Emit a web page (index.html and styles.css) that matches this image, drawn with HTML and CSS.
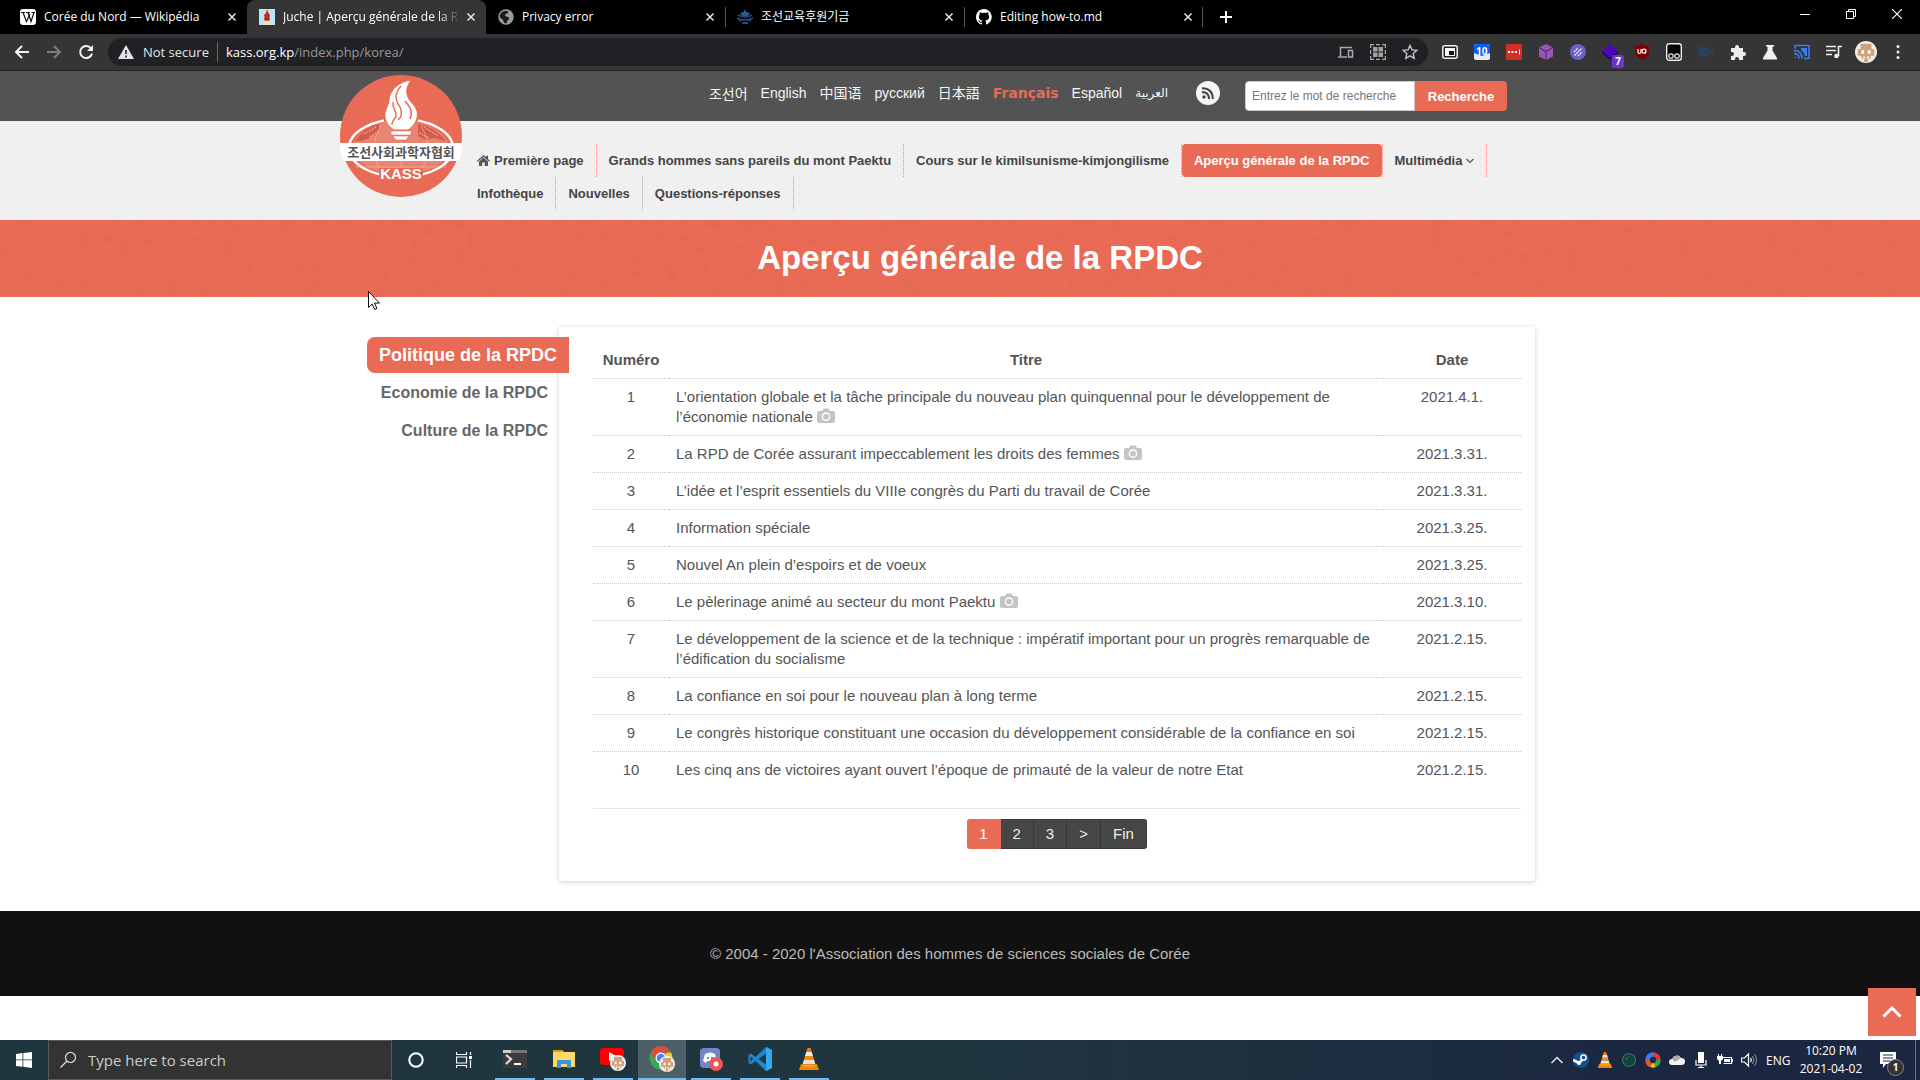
FILE: index.html
```html
<!DOCTYPE html>
<html lang="fr">
<head>
<meta charset="utf-8">
<title>Juche | Aperçu générale de la RPDC</title>
<link rel="stylesheet" href="styles.css">
</head>
<body>
<svg class="defs" aria-hidden="true">
  <symbol id="close" viewBox="0 0 16 16"><path d="M4 4l8 8M12 4l-8 8" stroke="#e8e8e8" stroke-width="1.700"/></symbol>
  <symbol id="camera" viewBox="0 0 18 16"><path d="M2 3h3l1.500-2.500h5L13 3h3a2 2 0 0 1 2 2v8a2 2 0 0 1-2 2H2a2 2 0 0 1-2-2V5a2 2 0 0 1 2-2z" fill="#c4c4c4"/><circle cx="9" cy="8.700" r="3.600" fill="none" stroke="#fff" stroke-width="1.500"/></symbol>
  <symbol id="avatar" viewBox="0 0 24 24"><circle cx="12" cy="12" r="12" fill="#efeeec"/><path d="M6 3h12v6h3v7h-4v3h-3v4h-4v-4H7v-3H3V9h3z" fill="#d3a078"/><path d="M7 10h3v4H7zM14 10h3v4h-3zM9 17h2v2H9zM13 17h2v2h-2z" fill="#fff"/></symbol>
  <symbol id="cone" viewBox="0 0 20 22"><path d="M8.500 0h3l1.300 4H7.200z" fill="#f07d0c"/><path d="M7.200 4h5.600l1.200 4H6z" fill="#eee"/><path d="M6 8h8l1.200 4H4.800z" fill="#f58a10"/><path d="M4.800 12h10.400l1.200 4H3.600z" fill="#e4e4e4"/><path d="M2 16h16l2 6H0z" fill="#f58206"/><path d="M4 18h12" stroke="#ffbd50"/></symbol>
</svg>

<header class="browser">
  <div class="tabs">
    <div class="tab">
      <svg width="16" height="16" viewBox="0 0 16 16"><rect width="16" height="16" rx="3" fill="#fff"/><path d="M1 3.500h4M6 3.500h4M11.500 3.500H15M3 3.500l3.500 9L10 5M8 3.500l3 9 3-9" fill="none" stroke="#111" stroke-width="1.200"/></svg>
      <span class="tab-title">Corée du Nord — Wikipédia</span>
      <button class="icon-btn" aria-label="Close tab"><svg width="14" height="14"><use href="#close"/></svg></button>
    </div>
    <div class="tab tab-active">
      <svg width="16" height="16" viewBox="0 0 16 16"><rect width="16" height="16" fill="#bfe4f5"/><path d="M8 0l1 3 2 3-1 5H6L5 6l2-2z" fill="#d02a16"/><path d="M5 9h6l-1 3-1 3H7l-1-3z" fill="#a52b18"/><path d="M4 13q4-3 8 0l-1 3H5z" fill="#f4e4ae"/></svg>
      <span class="tab-title fade">Juche | Aperçu générale de la RPDC</span>
      <button class="icon-btn" aria-label="Close tab"><svg width="14" height="14"><use href="#close"/></svg></button>
    </div>
    <div class="tab">
      <svg width="16" height="16" viewBox="0 0 16 16"><circle cx="8" cy="8" r="7" fill="#9a9a9a"/><path d="M6 1c3 1 5 1 4 3-2 1-3 1-3 3l3 1c2 1 1 3-1 4v3c-4 0-3-4-5-5L1 8c0-3 3-7 5-7z" fill="#1a1a1a"/><circle cx="8" cy="8" r="7" fill="none" stroke="#9a9a9a" stroke-width="1.500"/></svg>
      <span class="tab-title">Privacy error</span>
      <button class="icon-btn" aria-label="Close tab"><svg width="14" height="14"><use href="#close"/></svg></button>
    </div>
    <div class="tab tab-line">
      <svg width="16" height="16" viewBox="0 0 16 16"><path d="M8 0l1.500 3L13 4l-2 3H5L3 4l3.500-1z" fill="#2f5896"/><path d="M1 6q7 4 14 0M0 9q8 4 16 0M2 12q6-3 12 0" fill="none" stroke="#27497e" stroke-width="1.600"/><path d="M5 13h6v2H5z" fill="#27497e"/></svg>
      <span class="tab-title">조선교육후원기금</span>
      <button class="icon-btn" aria-label="Close tab"><svg width="14" height="14"><use href="#close"/></svg></button>
    </div>
    <div class="tab tab-line">
      <svg width="16" height="16" viewBox="0 0 16 16"><path fill="#fff" d="M8 0C3.600 0 0 3.600 0 8c0 3.500 2.300 6.500 5.500 7.600.4.100.5-.2.500-.4v-1.400c-2.200.5-2.700-1-2.700-1-.4-.9-.9-1.200-.9-1.200-.7-.5.100-.5.100-.5.800.1 1.200.8 1.200.8.700 1.300 1.900.9 2.300.7.100-.5.300-.9.500-1.100-1.800-.2-3.600-.9-3.600-4 0-.9.300-1.600.8-2.100-.1-.2-.4-1 .1-2.100 0 0 .7-.2 2.200.8a7.500 7.500 0 0 1 4 0c1.500-1 2.200-.8 2.200-.8.400 1.100.2 1.900.1 2.100.5.600.8 1.300.8 2.100 0 3.100-1.900 3.700-3.700 3.900.3.300.6.800.6 1.500v2.200c0 .2.100.5.500.4A8 8 0 0 0 8 0z"/></svg>
      <span class="tab-title">Editing how-to.md</span>
      <button class="icon-btn" aria-label="Close tab"><svg width="14" height="14"><use href="#close"/></svg></button>
    </div>
    <button class="new-tab" aria-label="New tab"><svg width="14" height="14" viewBox="0 0 14 14"><path d="M7 1v12M1 7h12" stroke="#fff" stroke-width="2"/></svg></button>
    <div class="window-controls">
      <button class="icon-btn" aria-label="Minimize"><svg width="10" height="10"><path d="M0 5.500h10" stroke="#fff"/></svg></button>
      <button class="icon-btn" aria-label="Restore"><svg width="10" height="10" viewBox="0 0 10 10"><path d="M.5 2.500h7v7h-7zM2.500 2.500v-2h7v7h-2" fill="none" stroke="#fff"/></svg></button>
      <button class="icon-btn" aria-label="Close"><svg width="10" height="10" viewBox="0 0 10 10"><path d="M0 0l10 10M10 0L0 10" stroke="#fff" stroke-width="1.200"/></svg></button>
    </div>
  </div>
  <div class="toolbar">
    <div class="nav-buttons">
      <button class="icon-btn" aria-label="Back"><svg width="16" height="16" viewBox="0 0 16 16"><path d="M15 8H2M8 2L2 8l6 6" fill="none" stroke="#f2f2f2" stroke-width="2"/></svg></button>
      <button class="icon-btn" aria-label="Forward"><svg width="16" height="16" viewBox="0 0 16 16"><path d="M1 8h13M8 2l6 6-6 6" fill="none" stroke="#7d7d7d" stroke-width="2"/></svg></button>
      <button class="icon-btn" aria-label="Reload"><svg width="16" height="16" viewBox="0 0 16 16"><path d="M13 4.500A6 6 0 1 0 14 9.500" fill="none" stroke="#f2f2f2" stroke-width="2"/><path d="M15 1v6H9z" fill="#f2f2f2"/></svg></button>
    </div>
    <div class="address">
      <svg width="16" height="16" viewBox="0 0 16 16"><path d="M8 1l8 14H0z" fill="#e4e4e4"/><path d="M8 6v4M8 11.500v2" stroke="#222" stroke-width="1.600"/></svg>
      <span class="insecure">Not secure</span>
      <span class="url"><b>kass.org.kp</b>/index.php/korea/</span>
      <div class="address-icons">
        <svg width="16" height="16" viewBox="0 0 16 16"><path d="M0 13h9M2.500 12V3.500H14M10.500 6.500h4V13h-4z" fill="none" stroke="#aaa" stroke-width="1.500"/></svg>
        <svg width="16" height="16" viewBox="0 0 16 16"><path d="M.6 4V.6H4M12 .6h3.400V4M15.400 12v3.400H12M4 15.400H.6V12M6 .6h4M6 15.400h4M.6 6v4M15.400 6v4" fill="none" stroke="#aaa" stroke-width="1.200"/><path d="M3 3h4.500v4.500H3zM8.500 3H13v4.500H8.500zM3 8.500h4.500V13H3zM8.500 8.500H13V13H8.500z" fill="#a8a0a0"/></svg>
        <svg width="16" height="16" viewBox="0 0 16 16"><path d="M8 1.500l2 4.400 4.800.5-3.600 3.200 1 4.700L8 11.900l-4.200 2.400 1-4.700L1.200 6.400 6 5.900z" fill="none" stroke="#c4c4c4" stroke-width="1.400"/></svg>
      </div>
    </div>
    <div class="extensions">
      <svg width="16" height="16" viewBox="0 0 16 16"><rect x=".8" y="1.800" width="14.400" height="12.400" rx="2" fill="#222" stroke="#eee" stroke-width="1.500"/><path d="M3 4h10v8H3z" fill="#f6f6f6"/><path d="M7 7h5v4H7z" fill="#111"/></svg>
      <svg width="16" height="16" viewBox="0 0 16 16"><rect width="16" height="16" rx="2" fill="#e6ecf5"/><path d="M0 2q0-2 2-2h12q2 0 2 2v7l-8 3-8-3z" fill="#0a5cff"/><text x="2" y="11" class="svg-badge">10</text></svg>
      <svg width="16" height="16" viewBox="0 0 16 16"><rect width="16" height="16" rx="1" fill="#d32d27"/><path d="M2 7h2v2H2zM5.500 7h2v2h-2zM9 7h2v2H9zM13 5.500h1v5h-1z" fill="#fff"/></svg>
      <svg width="16" height="16" viewBox="0 0 16 16"><path d="M8 0l7 3.500v9L8 16l-7-3.500v-9z" fill="#9a55b8"/><path d="M1 3.500l7 4 7-4M8 7.500V16" fill="none" stroke="#54306b" stroke-width="1.200"/></svg>
      <svg width="16" height="16" viewBox="0 0 16 16"><circle cx="8" cy="8" r="8" fill="#6a5fc4"/><path d="M4 8l4-4M4.500 11.500l7-7M8 12l4-4" stroke="#fff" stroke-width="1.200" stroke-dasharray="2 .6"/></svg>
      <span class="ext-badged"><svg width="16" height="16" viewBox="0 0 16 16"><path d="M8 0l8 7-8 7-8-7z" fill="#4a08b8"/><path d="M0 7l8 7v2L0 9zM16 7l-8 7v2l8-7z" fill="#25006c"/></svg><span class="ext-badge">7</span></span>
      <svg width="16" height="16" viewBox="0 0 16 16"><path d="M8 0q4 2 7 2v5q0 6-7 9-7-3-7-9V2q3 0 7-2z" fill="#800000"/><path d="M4 5v3q0 1.500 1.500 1.500T7 8V5" fill="none" stroke="#fff" stroke-width="1.200"/><circle cx="10" cy="7.200" r="2" fill="none" stroke="#fff" stroke-width="1.200"/></svg>
      <svg width="16" height="18" viewBox="0 0 16 18"><rect x=".7" y=".7" width="14.600" height="16.600" rx="2.500" fill="#050505" stroke="#eee" stroke-width="1.400"/><circle cx="5" cy="13" r="2.200" fill="none" stroke="#ddd" stroke-width="1.300"/><circle cx="11" cy="13" r="2.200" fill="none" stroke="#ddd" stroke-width="1.300"/></svg>
      <svg width="16" height="16" viewBox="0 0 16 16"><path d="M2 3h7q2 0 2 2v6q0 2-2 2H2q-2 0-2-2V5q0-2 2-2zM12 7l4-3v8l-4-3z" fill="#2d4059"/></svg>
      <svg width="16" height="16" viewBox="0 0 16 16"><path d="M1 4h4V3a2 2 0 0 1 4 0v1h4v4h1a2 2 0 0 1 0 4h-1v4H9v-1a2 2 0 0 0-4 0v1H1v-4h1a2 2 0 0 0 0-4H1z" fill="#ececec"/></svg>
      <svg width="16" height="16" viewBox="0 0 16 16"><path d="M4 1h8v1.500h-1.500v4L15 14v1.500H1V14l4.500-7.500v-4H4z" fill="#f0f0f0"/></svg>
      <svg width="16" height="16" viewBox="0 0 16 16"><path d="M1 4.500v-3h14v13h-5" fill="none" stroke="#3b7de8" stroke-width="1.600"/><path d="M7 4h6v8h-2q-1-4-4-6z" fill="#3b7de8"/><path d="M0 6.500q8 0 8 8M0 9.500q5 0 5 5M1 13v1" fill="none" stroke="#3b7de8" stroke-width="1.700"/></svg>
      <svg width="16" height="16" viewBox="0 0 16 16"><path d="M0 2.500h10M0 6.500h10M0 10.500h6M12.500 12V2.500H16" fill="none" stroke="#eee" stroke-width="1.600"/><circle cx="10.500" cy="12" r="2.300" fill="#eee"/></svg>
      <svg class="avatar" width="22" height="22"><use href="#avatar"/></svg>
      <svg width="16" height="16" viewBox="0 0 16 16"><circle cx="8" cy="2.500" r="1.500" fill="#eee"/><circle cx="8" cy="8" r="1.500" fill="#eee"/><circle cx="8" cy="13.500" r="1.500" fill="#eee"/></svg>
    </div>
  </div>
</header>

<main class="page">
  <div class="topbar">
    <div class="header-inner topbar-inner">
      <nav class="languages" aria-label="Langues">
        <a href="#" class="lang-ko" lang="ko">조선어</a>
        <a href="#">English</a>
        <a href="#" lang="zh">中国语</a>
        <a href="#" lang="ru">русский</a>
        <a href="#" lang="ja">日本語</a>
        <a href="#" class="current">Français</a>
        <a href="#">Español</a>
        <a href="#" class="lang-ar" lang="ar">العربية</a>
      </nav>
      <a href="#" class="rss" aria-label="RSS"><svg width="12" height="12" viewBox="0 0 12 12"><circle cx="2" cy="10" r="1.700" fill="#444"/><path d="M0 5q7 0 7 7M0 1.200Q10.800 1.200 10.800 12" fill="none" stroke="#444" stroke-width="2"/></svg></a>
      <form class="search">
        <input type="text" placeholder="Entrez le mot de recherche" aria-label="Entrez le mot de recherche">
        <button type="button">Recherche</button>
      </form>
    </div>
  </div>

  <div class="navbar">
    <div class="header-inner navbar-inner">
      <a href="#" class="logo" aria-label="KASS">
        <svg width="122" height="122" viewBox="0 0 122 122">
          <circle cx="61" cy="61" r="61" fill="#e96b56"/>
          <ellipse cx="61" cy="73" rx="48" ry="27" fill="#e88472"/>
          <path d="M15 66q9-13 24-17 3 9-7 12-5 5-17 5zM76 48q19 4 30 18l-12-3-8 2-12-6z" fill="#d45d49"/>
          <path d="M24 59l12-7M30 62l9-6M84 52l14 9M79 58l10 5" stroke="#f6c3b9" stroke-dasharray="2 1"/>
          <path d="M61 46v54M41 50q-14 24 0 47M81 50q14 24 0 47M16 92h90" fill="none" stroke="#f4b0a3" stroke-width=".7"/>
          <ellipse cx="61" cy="73" rx="52" ry="29" fill="none" stroke="#fff" stroke-width="2.500"/>
          <path d="M44 38h34v8H44z" fill="#e96b56"/><path d="M44 46h34v15H44z" fill="#e88472"/><path d="M39 93h44v13H39z" fill="#e96b56"/>
          <path d="M71 5C58 7 50 15 49 25c0 6-5 10-4 17 1 7 6 11 9 13h14c6-4 11-11 9-19-2-7-9-10-10-17-1-5 1-9 4-14z" fill="#fff" stroke="#e96b56"/>
          <path d="M61 11c-7 8-6 14-1 21 3 6 1 11-2 13M53 27c-1 7 4 9 3 14-1 4-5 5-4 9M65 26c6 7 8 11 5 18" fill="none" stroke="#e96b56" stroke-width="1.500"/>
          <path d="M51 56h20v4H51zM53 61h16l-3 4H56z" fill="#fff" stroke="#e96b56" stroke-width=".6"/>
          <path d="M0 68h122q0 10-3 18H3Q0 78 0 68z" fill="#fff"/>
          <text x="61" y="82" class="logo-ko">조선사회과학자협회</text>
          <text x="61" y="104" class="logo-kass">KASS</text>
        </svg>
      </a>
      <nav aria-label="Menu principal">
        <ul class="menu">
          <li><a href="#"><svg class="home" width="13" height="11" viewBox="0 0 13 11"><path d="M6.500 0L9 2.200V.8h2v3.200l2 1.800-.8.900-5.700-5-5.700 5L0 5.800z" fill="#555"/><path d="M6.500 2.600L11 6.500V11H7.800V7.500H5.200V11H2V6.500z" fill="#555"/></svg> Première page</a></li>
          <li><a href="#">Grands hommes sans pareils du mont Paektu</a></li>
          <li><a href="#">Cours sur le kimilsunisme-kimjongilisme</a></li>
          <li><a href="#" class="current">Aperçu générale de la RPDC</a></li>
          <li><a href="#">Multimédia <svg width="8" height="6" viewBox="0 0 8 6"><path d="M.5 1L4 4.500 7.500 1" fill="none" stroke="#555" stroke-width="1.200"/></svg></a></li>
          <li><a href="#">Infothèque</a></li>
          <li><a href="#">Nouvelles</a></li>
          <li><a href="#">Questions-réponses</a></li>
        </ul>
      </nav>
    </div>
  </div>

  <div class="banner">
    <svg class="grain" width="100%" height="100%" aria-hidden="true"><filter id="grain"><feTurbulence type="fractalNoise" baseFrequency=".09 .12" numOctaves="4" seed="4"/><feColorMatrix values="0 0 0 0 .45  0 0 0 0 .1  0 0 0 0 .05  0 0 0 4 -2.200"/></filter><rect width="100%" height="100%" filter="url(#grain)"/></svg>
    <h1>Aperçu générale de la RPDC</h1>
  </div>

  <div class="content">
    <aside class="sidebar">
      <a href="#" class="current">Politique de la RPDC</a>
      <a href="#">Economie de la RPDC</a>
      <a href="#">Culture de la RPDC</a>
    </aside>
    <section class="card">
      <table>
        <thead><tr><th class="col-num">Numéro</th><th>Titre</th><th class="col-date">Date</th></tr></thead>
        <tbody>
          <tr><td>1</td><td><a href="#">L’orientation globale et la tâche principale du nouveau plan quinquennal pour le développement de l’économie nationale</a> <svg class="camera" width="18" height="16"><use href="#camera"/></svg></td><td>2021.4.1.</td></tr>
          <tr><td>2</td><td><a href="#">La RPD de Corée assurant impeccablement les droits des femmes</a> <svg class="camera" width="18" height="16"><use href="#camera"/></svg></td><td>2021.3.31.</td></tr>
          <tr><td>3</td><td><a href="#">L’idée et l’esprit essentiels du VIIIe congrès du Parti du travail de Corée</a></td><td>2021.3.31.</td></tr>
          <tr><td>4</td><td><a href="#">Information spéciale</a></td><td>2021.3.25.</td></tr>
          <tr><td>5</td><td><a href="#">Nouvel An plein d’espoirs et de voeux</a></td><td>2021.3.25.</td></tr>
          <tr><td>6</td><td><a href="#">Le pèlerinage animé au secteur du mont Paektu</a> <svg class="camera" width="18" height="16"><use href="#camera"/></svg></td><td>2021.3.10.</td></tr>
          <tr><td>7</td><td><a href="#">Le développement de la science et de la technique : impératif important pour un progrès remarquable de l’édification du socialisme</a></td><td>2021.2.15.</td></tr>
          <tr><td>8</td><td><a href="#">La confiance en soi pour le nouveau plan à long terme</a></td><td>2021.2.15.</td></tr>
          <tr><td>9</td><td><a href="#">Le congrès historique constituant une occasion du développement considérable de la confiance en soi</a></td><td>2021.2.15.</td></tr>
          <tr><td>10</td><td><a href="#">Les cinq ans de victoires ayant ouvert l’époque de primauté de la valeur de notre Etat</a></td><td>2021.2.15.</td></tr>
        </tbody>
      </table>
      <nav class="pagination" aria-label="Pages">
        <a href="#" class="current">1</a><a href="#">2</a><a href="#">3</a><a href="#">&gt;</a><a href="#">Fin</a>
      </nav>
    </section>
  </div>

  <footer class="footer">© 2004 - 2020 l'Association des hommes de sciences sociales de Corée</footer>
  <button class="to-top" aria-label="Haut de page"><svg width="20" height="12" viewBox="0 0 20 12"><path d="M1.500 10.500L10 2l8.500 8.500" fill="none" stroke="#fff" stroke-width="3"/></svg></button>
  <svg class="cursor" width="12" height="19" viewBox="0 0 12 19"><path d="M.5.500v16l3.700-3.500 2.400 5.400 2.300-1-2.400-5.300h5z" fill="#fff" stroke="#111"/></svg>
</main>

<footer class="taskbar">
  <button class="start" aria-label="Start"><svg width="16" height="16" viewBox="0 0 16 16"><path d="M0 2l6.500-.9v6.400H0zM7.300 1L16 0v7.500H7.300zM0 8.300h6.500v6.400L0 13.900zM7.300 8.300H16V16l-8.700-1.200z" fill="#fff"/></svg></button>
  <label class="task-search">
    <svg width="16" height="16" viewBox="0 0 16 16"><circle cx="10.500" cy="5.500" r="5" fill="none" stroke="#ddd" stroke-width="1.200"/><path d="M7 9l-6.500 6.500" stroke="#ddd" stroke-width="1.200"/></svg>
    <input type="text" placeholder="Type here to search">
  </label>
  <button class="start" aria-label="Cortana"><svg width="16" height="16"><circle cx="8" cy="8" r="6.700" fill="none" stroke="#fff" stroke-width="2"/></svg></button>
  <button class="start" aria-label="Task view"><svg width="16" height="16" viewBox="0 0 16 16"><path d="M.5 0v2.500h10V0M.5 16v-2.500h10V16M.5 5h10v6H.500zM14.500 0v3M14.500 8v8" fill="none" stroke="#fff" stroke-width="1.200"/><path d="M13 4h3v3h-3z" fill="#fff"/></svg></button>
  <div class="apps">
    <button class="app" aria-label="Terminal"><svg width="24" height="20" viewBox="0 0 24 20"><rect y="1" width="24" height="18" rx="1" fill="#3b3b3b"/><path d="M0 1h24v3H0z" fill="#777"/><path d="M0 1h8v3H0z" fill="#ccc"/><path d="M3 6l5 4-5 5" fill="none" stroke="#ddd" stroke-width="2.200"/><path d="M11 15h7" stroke="#fff" stroke-width="2"/></svg></button>
    <button class="app" aria-label="Explorer"><svg width="22" height="20" viewBox="0 0 22 20"><path d="M0 1h9l2 2h11v15H0z" fill="#ffd768"/><path d="M0 1h9l1 2H0z" fill="#e0a100"/><path d="M4 11h14v8h-4v-4H8v4H4z" fill="#3a97dc"/></svg></button>
    <button class="app" aria-label="YouTube"><svg width="26" height="24" viewBox="0 0 26 24"><rect y="1" width="24" height="17" rx="4" fill="#f00"/><path d="M9 5l8 4.500L9 14z" fill="#fff"/><use href="#avatar" x="10" y="8" width="16" height="16"/></svg></button>
    <button class="app app-active" aria-label="Chrome"><svg width="26" height="26" viewBox="0 0 26 26"><circle cx="12" cy="12" r="11.500" fill="#3aa757"/><path d="M2 6a11.500 11.500 0 0 1 20 0l-10 1-5 8z" fill="#e0493d"/><path d="M22 6.500a11.500 11.500 0 0 1-10 17l5-9V7z" fill="#fbc62f"/><circle cx="12" cy="12" r="5.500" fill="#fff"/><circle cx="12" cy="12" r="4.300" fill="#4285f4"/><use href="#avatar" x="10" y="10" width="16" height="16"/></svg></button>
    <button class="app" aria-label="Discord"><svg width="24" height="24" viewBox="0 0 24 24"><rect x="1" y="1" width="20" height="20" rx="4" fill="#7583c9"/><path d="M6 7q5-3 10 0l2 7-3 2-1-2H8l-1 2-3-2z" fill="#fff"/><path d="M8 10h2v2H8zM12 10h2v2h-2z" fill="#7583c9"/><circle cx="17" cy="17" r="7" fill="#ed5555"/><circle cx="17" cy="17" r="2.500" fill="#fff"/></svg></button>
    <button class="app" aria-label="Code"><svg width="24" height="24" viewBox="0 0 24 24"><path d="M18 0l6 3v18l-6 3L7.500 14 3 17.500.500 16V8L3 6.500 7.500 10z" fill="#1c86d1"/><path d="M18 6.500v11L10.500 12zM2.500 9.500v5L5 12z" fill="#20363f"/><path d="M18 0l6 3v18l-6 3z" fill="#34a8f0"/></svg></button>
    <button class="app" aria-label="VLC"><svg width="20" height="22"><use href="#cone"/></svg></button>
  </div>
  <div class="tray">
    <svg width="16" height="16" viewBox="0 0 16 16"><path d="M2.500 11L8 5.500l5.500 5.500" fill="none" stroke="#eee" stroke-width="1.400"/></svg>
    <svg width="16" height="16" viewBox="0 0 16 16"><circle cx="8" cy="8" r="8" fill="#15508c"/><path d="M0 8q2 1 6 3l3-3" stroke="#fff" stroke-width="2.600" fill="none"/><circle cx="10.500" cy="5.500" r="2.600" fill="#15508c" stroke="#fff" stroke-width="1.500"/><circle cx="6" cy="11" r="2" fill="#fff"/></svg>
    <svg width="16" height="16"><use href="#cone"/></svg>
    <svg width="16" height="16" viewBox="0 0 16 16"><circle cx="8" cy="8" r="6.500" fill="#173f3f" stroke="#2a7a5b" stroke-width="1.200"/><path d="M5 8a3 3 0 0 1 3-3" fill="none" stroke="#2a7a5b"/></svg>
    <svg width="16" height="16" viewBox="0 0 16 16"><g fill="none" stroke-width="4.500"><path d="M2.500 8A5.500 5.500 0 0 1 8 2.500" stroke="#3a7df0"/><path d="M8 2.500A5.500 5.500 0 0 1 13.500 8" stroke="#e8372c"/><path d="M13.500 8A5.500 5.500 0 0 1 10 13" stroke="#2da94f"/><path d="M10 13a5.500 5.500 0 0 1-4 0" stroke="#e9c51c"/><path d="M6 13.200A5.500 5.500 0 0 1 2.500 8" stroke="#e8572c"/></g></svg>
    <svg width="16" height="16" viewBox="0 0 16 16"><path d="M3 13a3 3 0 0 1 0-6 5 5 0 0 1 9-1 3.500 3.500 0 0 1 1 7z" fill="#f4f4f4"/><path d="M3 7a5 5 0 0 1 9-1L6 10z" fill="#aaa"/></svg>
    <svg width="16" height="16" viewBox="0 0 16 16"><path d="M5 0h6v11H5z" fill="#fff"/><path d="M3 8v5h10V8M8 13v3M5 15.500h6" fill="none" stroke="#fff" stroke-width="1.200"/></svg>
    <svg width="16" height="16" viewBox="0 0 16 16"><path d="M4.500 5.500h10v6h-8" fill="none" stroke="#fff" stroke-width="1.200"/><path d="M7 7h6v3H7zM15 7h1v3h-1zM0 4h6v3L4 9H2L0 7zM1 2h1v2H1zM4 2h1v2H4zM2 9h2v3H2z" fill="#fff"/></svg>
    <svg width="16" height="16" viewBox="0 0 16 16"><path d="M.5 6h3l4-4v12l-4-4h-3zM9.500 6q1.500 2 0 4" fill="none" stroke="#fff" stroke-width="1.200"/><path d="M11.500 4q3 4 0 8M13.500 2q4 6 0 12" fill="none" stroke="#8a93a8"/></svg>
    <span class="input-lang">ENG</span>
    <div class="clock"><span>10:20 PM</span><span>2021-04-02</span></div>
    <button class="notify" aria-label="Notifications"><svg width="16" height="16" viewBox="0 0 16 16"><path d="M0 0h16v12H6l-3 4v-4H0z" fill="#fff"/><path d="M3 3h10M3 6h10M3 9h7" stroke="#1b2740" stroke-width="1.200"/></svg><span class="notify-count">1</span></button>
  </div>
</footer>
</body>
</html>
```
FILE: styles.css
```css
* { box-sizing: border-box; }
body {
  margin: 0;
  min-height: 100vh;
  display: flex;
  flex-direction: column;
  font-family: "Liberation Sans", "Noto Sans CJK KR", sans-serif;
  color: #555;
  background: #fff;
}
a { color: inherit; text-decoration: none; }
button { border: 0; padding: 0; background: none; font: inherit; color: inherit; }
svg { display: block; flex: none; }
.defs { position: absolute; width: 0; height: 0; }

/* Browser window */
.browser { font-family: "Open Sans", "Noto Sans CJK KR", sans-serif; color: #fff; }
.tabs { display: flex; align-items: stretch; height: 34px; padding-left: 8px; background: #000; }
.tab { display: flex; align-items: center; gap: 8px; width: 239px; padding: 0 8px 0 12px; font-size: 12px; border-radius: 8px 8px 0 0; }
.tab-active { background: #353535; }
.tab-line { background: linear-gradient(#555, #555) no-repeat left center / 1px 20px; }
.tab-line:nth-child(5) { background-image: linear-gradient(#555, #555), linear-gradient(#555, #555); background-position: left center, right center; background-size: 1px 20px; background-repeat: no-repeat; }
.tab-title { flex: 1; min-width: 0; overflow: hidden; white-space: nowrap; line-height: 18px; }
.fade { margin-right: -4px; -webkit-mask-image: linear-gradient(90deg, #000 88%, transparent); mask-image: linear-gradient(90deg, #000 88%, transparent); }
.icon-btn { display: flex; }
.new-tab { display: flex; align-items: center; margin-left: 16px; }
.window-controls { display: flex; align-items: center; gap: 36px; margin-left: auto; padding: 0 18px 6px 0; }
.toolbar { display: flex; align-items: center; height: 37px; background: #353535; border-bottom: 1px solid #222; }
.nav-buttons { display: flex; gap: 16px; padding: 0 14px; }
.address { flex: 1; display: flex; align-items: center; gap: 8px; height: 28px; padding: 0 10px; border-radius: 14px; background: #202124; font-size: 13px; line-height: 20px; }
.insecure { padding: 0 8px 0 1px; border-right: 1px solid #666; color: #e4e4e4; }
.url { color: #999; }
.url b { font-weight: 400; color: #fff; }
.address-icons { display: flex; gap: 16px; margin-left: auto; }
.extensions { display: flex; align-items: center; gap: 16px; padding: 0 14px; }
.avatar { margin: 0 -3px; }
.ext-badged { position: relative; }
.ext-badge { position: absolute; left: 10px; top: 11px; width: 12px; height: 13px; border-radius: 2px; background: #6b35c9; font-size: 10px; line-height: 13px; font-weight: 700; text-align: center; }
.svg-badge { font: 700 10px "Open Sans", sans-serif; fill: #fff; }

/* Site header */
.page { flex: 1; position: relative; }
.header-inner { max-width: 1220px; margin: 0 auto; }
.topbar, .navbar, .content, .footer { padding-right: 20px; }
.topbar { background: #535353; }
.topbar-inner { display: flex; justify-content: flex-end; align-items: flex-start; height: 50px; padding: 10px 53px 0 0; }
.languages { display: flex; gap: 13px; font-size: 14px; line-height: 24px; color: #f5f5f5; }
.languages .current { color: #e96b56; font-family: "DejaVu Sans", sans-serif; font-weight: 700; }
.lang-ko { font-family: "Noto Sans CJK KR", serif; }
.lang-ar { font-family: "DejaVu Sans", sans-serif; font-size: 12px; }
.rss { display: flex; align-items: center; justify-content: center; width: 24px; height: 24px; margin: 0 25px 0 28px; border-radius: 50%; background: #f5f5f5; }
.search { display: flex; height: 30px; }
.search input { width: 170px; padding: 0 6px; border: 1px solid #ccc; border-radius: 4px 0 0 4px; font: 12px "Liberation Sans", sans-serif; background: #fff; }
.search input::placeholder { color: #777; }
.search button { width: 92px; border-radius: 0 4px 4px 0; background: #e96b56; color: #fff; font-size: 13px; font-weight: 700; }
.navbar { background: #f0f0f0; }
.navbar-inner { display: flex; min-height: 99px; }
.logo { margin-top: -46px; height: 122px; }
.logo-ko { font: 700 13px "Noto Sans CJK KR", sans-serif; fill: #555; text-anchor: middle; }
.logo-kass { font: 700 15px "Liberation Sans", sans-serif; fill: #fff; text-anchor: middle; }
.menu { display: flex; flex-wrap: wrap; margin: 0; padding: 23px 0 0 3px; list-style: none; font-size: 13px; font-weight: 700; color: #444; }
.menu li { border-right: 1px dotted #f58a8a; }
.menu a { display: flex; align-items: center; gap: 4px; padding: 0 12px; line-height: 33px; border-radius: 4px; }
.menu .current { background: #e96b56; color: #fff; }

/* Banner */
.banner { position: relative; height: 77px; padding-left: 40px; background: #e96b56; color: #fff; text-align: center; }
.grain { position: absolute; inset: 0; opacity: .1; }
.banner h1 { position: relative; margin: 0; font-size: 33px; line-height: 76px; }

/* Content */
.content { display: grid; grid-template-columns: 194px minmax(0, 976px); justify-content: center; padding-top: 30px; padding-bottom: 30px; }
.sidebar { display: flex; flex-direction: column; align-items: flex-end; padding-top: 10px; font-size: 16px; font-weight: 700; color: #666; }
.sidebar a { padding: 0 11px; margin-bottom: 2px; line-height: 36px; }
.sidebar .current { position: relative; margin-right: -10px; padding: 0 12px; border-radius: 8px 0 0 8px; background: #e96b56; color: #fff; font-size: 18px; white-space: nowrap; }
.card { padding: 15px 14px 32px 34px; border-radius: 3px; box-shadow: 0 1px 5px rgba(0, 0, 0, .2); }
table { width: 100%; table-layout: fixed; border-collapse: collapse; font-size: 15px; line-height: 20px; }
th, td { padding: 8px 7px; border-bottom: 1px dotted #ccc; text-align: center; vertical-align: top; }
.col-num { width: 76px; }
.col-date { width: 138px; }
td:nth-child(2) { text-align: left; }
tbody tr:last-child td { border-bottom: 1px solid #e8e8e8; padding-bottom: 28px; }
.camera { display: inline-block; vertical-align: -2px; }
.pagination { display: flex; justify-content: center; margin-top: 10px; font-size: 15px; line-height: 28px; color: #eee; }
.pagination a { padding: 0 12px; background: #464646; border: 1px solid #383838; border-left: 0; }
.pagination .current { background: #e96b56; border-color: #e96b56; border-radius: 3px 0 0 3px; color: #fff; }
.pagination a:last-child { border-radius: 0 3px 3px 0; }
.footer { height: 85px; background: #111; color: #bbb; text-align: center; font-size: 15px; line-height: 85px; }
.to-top { position: absolute; right: 4px; bottom: 4px; display: flex; align-items: center; justify-content: center; width: 48px; height: 48px; background: #e96b56; }
.cursor { position: absolute; left: 368px; top: 220px; }

/* Taskbar */
.taskbar { display: flex; height: 40px; background: linear-gradient(90deg, #20363f 0 50%, #1b2740 85%); color: #fff; font-family: "Open Sans", sans-serif; }
.start { display: flex; align-items: center; justify-content: center; width: 48px; }
.task-search { display: flex; align-items: center; gap: 12px; width: 344px; padding: 0 11px; border: 1px solid #5a5a5a; background: #333; }
.task-search input { flex: 1; min-width: 0; border: 0; padding: 0; background: none; font: 15px "Open Sans", sans-serif; }
.task-search input::placeholder { color: #ccc; }
.apps { display: flex; gap: 9px; padding-left: 7px; }
.app { display: flex; align-items: center; justify-content: center; width: 40px; border-bottom: 2px solid #76b9ed; }
.app-active { width: 48px; margin: 0 -4px; background: #4d6068; }
.tray { display: flex; align-items: center; gap: 8px; margin-left: auto; border-right: 1px solid #6a7388; padding-right: 19px; margin-right: 4px; }
.input-lang { width: 28px; padding-left: 1px; font-size: 12px; }
.clock { display: flex; flex-direction: column; align-items: center; width: 60px; font-size: 12px; line-height: 18px; white-space: nowrap; }
.notify { position: relative; margin-left: 11px; }
.notify-count { position: absolute; left: 7px; top: 7px; width: 17px; height: 17px; border: 1px solid #888; border-radius: 50%; background: #333; font-size: 10px; line-height: 15px; font-weight: 700; }
```
